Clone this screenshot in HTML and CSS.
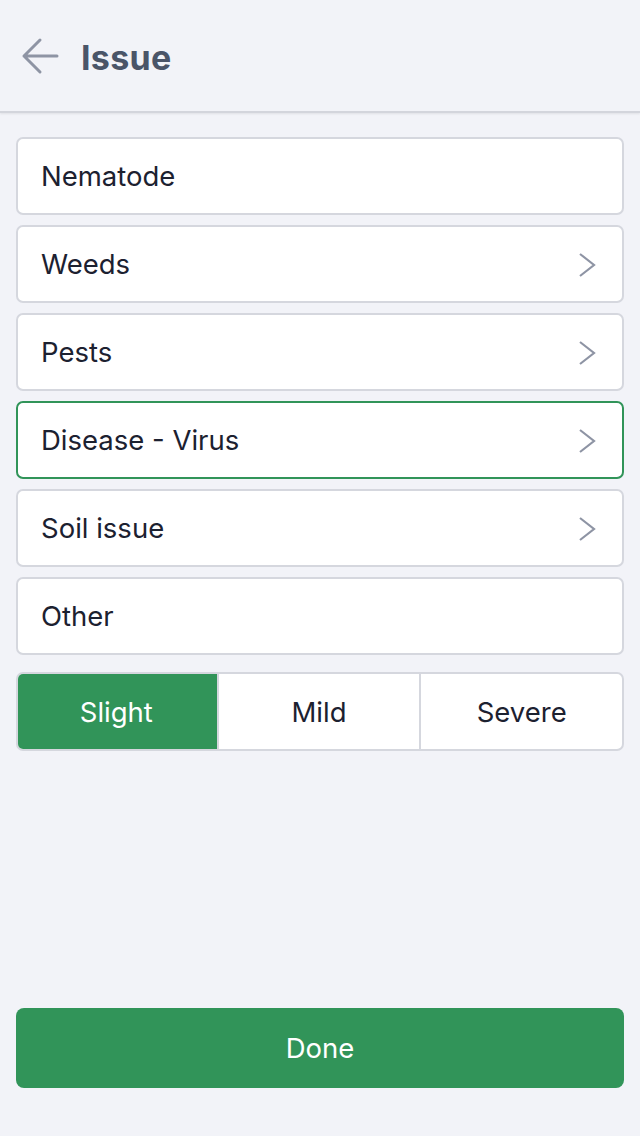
FILE: index.html
```html
<!DOCTYPE html>
<html>
<head>
<meta charset="utf-8">
<link rel="stylesheet" href="styles.css">
</head>
<body>
<div class="app">
  <header class="header">
    <svg class="back" width="38" height="38" viewBox="0 0 38 38"><path d="M36 19H3M19 3L3 19l16 16" fill="none" stroke="#8e94a4" stroke-width="3" stroke-linecap="round" stroke-linejoin="round"/></svg>
    <h1 class="title">Issue</h1>
  </header>
  <main class="content">
    <div class="list">
      <div class="item"><span>Nematode</span></div>
      <div class="item"><span>Weeds</span><svg class="chev" width="18" height="26" viewBox="0 0 18 26"><path d="M2 2l14 11L2 24" fill="none" stroke="#8e94a4" stroke-width="2.2"/></svg></div>
      <div class="item"><span>Pests</span><svg class="chev" width="18" height="26" viewBox="0 0 18 26"><path d="M2 2l14 11L2 24" fill="none" stroke="#8e94a4" stroke-width="2.2"/></svg></div>
      <div class="item active"><span>Disease - Virus</span><svg class="chev" width="18" height="26" viewBox="0 0 18 26"><path d="M2 2l14 11L2 24" fill="none" stroke="#8e94a4" stroke-width="2.2"/></svg></div>
      <div class="item"><span>Soil issue</span><svg class="chev" width="18" height="26" viewBox="0 0 18 26"><path d="M2 2l14 11L2 24" fill="none" stroke="#8e94a4" stroke-width="2.2"/></svg></div>
      <div class="item"><span>Other</span></div>
    </div>
    <div class="segment">
      <div class="seg selected">Slight</div>
      <div class="seg">Mild</div>
      <div class="seg">Severe</div>
    </div>
  </main>
  <div class="footer">
    <button class="done">Done</button>
  </div>
</div>
</body>
</html>
```

FILE: styles.css
```css
html, body {
  margin: 0;
  padding: 0;
  background: #f2f3f8;
  font-family: Inter, "Noto Sans", sans-serif;
}
.app {
  width: 640px;
  height: 1136px;
  display: flex;
  flex-direction: column;
  background: #f2f3f8;
}
.header {
  display: flex;
  align-items: center;
  padding-left: 21px;
  padding-top: 3px;
  border-bottom: 2px solid #d3d5dc;
  box-shadow: 0 1px 2px rgba(0,0,0,0.08);
  box-sizing: border-box;
  height: 113px;
}
.back {
  margin-top: -2px;
}
.title {
  margin: 0 0 0 22px;
  font-size: 34px;
  font-weight: 700;
  color: #4a5568;
  letter-spacing: 0.3px;
}
.content {
  flex: 1;
  padding: 24px 16px 0 16px;
}
.list {
  display: flex;
  flex-direction: column;
  gap: 10px;
}
.item {
  height: 78px;
  box-sizing: border-box;
  background: #fff;
  border: 2px solid #d5d7de;
  border-radius: 7px;
  display: flex;
  align-items: center;
  justify-content: space-between;
  padding: 0 26px 0 23px;
  font-size: 27.5px;
  color: #1c2130;
}
.item.active {
  border-color: #319459;
}
.chev {
  margin-top: 2px;
}
.segment {
  margin-top: 17px;
  display: flex;
  height: 79px;
  box-sizing: border-box;
  border: 2px solid #d5d7de;
  border-radius: 7px;
  overflow: hidden;
  background: #fff;
}
.seg {
  flex: 1;
  display: flex;
  align-items: center;
  justify-content: center;
  font-size: 27.5px;
  color: #1c2130;
  border-left: 2px solid #d5d7de;
}
.seg:first-child {
  border-left: none;
}
.seg.selected {
  background: #319459;
  color: #fff;
  margin: -2px 0 -2px -2px;
}
.footer {
  padding: 0 16px 48px 16px;
}
.done {
  width: 100%;
  height: 80px;
  border: none;
  border-radius: 8px;
  background: #319459;
  color: #fff;
  font-family: Inter, "Noto Sans", sans-serif;
  font-size: 27.5px;
  display: block;
}
```
